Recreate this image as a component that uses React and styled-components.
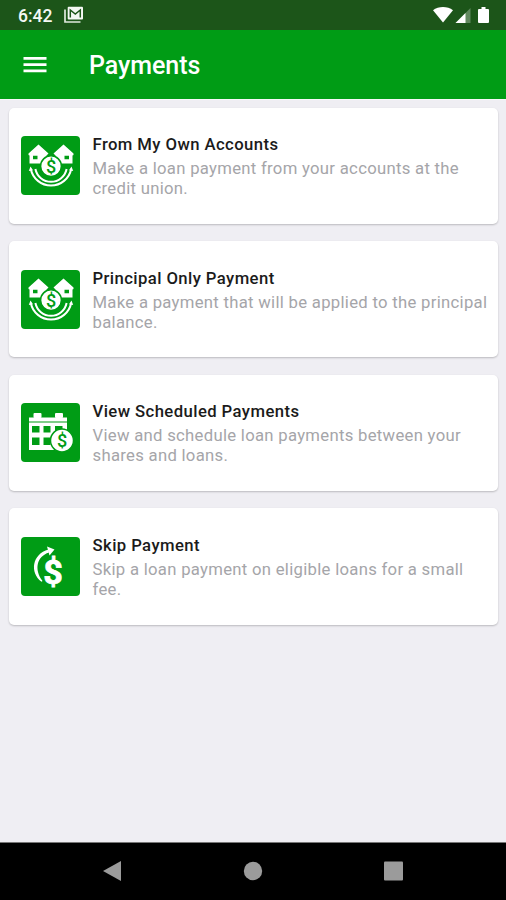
import React from "react";
import styled, { createGlobalStyle } from "styled-components";

const GlobalStyle = createGlobalStyle`
  body {
    margin: 0;
    background-color: #efeef3;
    font-family: Roboto, "Noto Sans", sans-serif;
  }
`;

const Screen = styled.div`
  display: flex;
  flex-direction: column;
  height: 900px;
  width: 506px;
  overflow: hidden;
`;

const StatusBar = styled.div`
  display: flex;
  align-items: center;
  flex: none;
  height: 30px;
  padding: 0 16px 0 18px;
  background-color: #1c5519;
  color: #f4f8f4;
`;

const Clock = styled.span`
  width: 46px;
  font-size: 17.5px;
  font-weight: 500;
  line-height: 30px;
  padding-top: 2px;
`;

const StatusIcons = styled.div`
  display: flex;
  margin-left: auto;
`;

const AppBar = styled.header`
  display: flex;
  align-items: center;
  flex: none;
  height: 69px;
  padding-left: 23px;
  background-color: #009c15;
  color: #fff;
`;

const MenuButton = styled.button`
  display: flex;
  width: 66px;
  padding: 0;
  border: 0;
  background: none;
  color: inherit;
`;

const PageTitle = styled.h1`
  margin: 0;
  padding-top: 2px;
  font-size: 25px;
  font-weight: 500;
  line-height: 30px;
  letter-spacing: -0.05px;
`;

const CardList = styled.main`
  display: flex;
  flex-direction: column;
  flex: 1;
  gap: 17.2px;
  padding: 7.5px 8px 0 9px;
  border-top: 1px solid #f8f8fa;
`;

const Card = styled.div`
  display: flex;
  align-items: center;
  flex: none;
  box-sizing: border-box;
  height: 116.4px;
  padding: 0 8px 0 12px;
  border-radius: 5px;
  background-color: #fff;
  box-shadow: 0 1px 2px rgba(0, 0, 0, 0.22);
`;

const Tile = styled.svg`
  display: block;
  flex: none;
  width: 59px;
  height: 59px;
  margin-right: 12.5px;
  border-radius: 4px;
  background-color: #009c15;
`;

const CardBody = styled.div`
  padding-top: 2px;
`;

const CardTitle = styled.div`
  font-size: 16.7px;
  font-weight: 500;
  line-height: 22px;
  letter-spacing: 0.41px;
  color: #1b1b1b;
  white-space: nowrap;
`;

const CardText = styled.div`
  margin-top: 3px;
  font-size: 16.7px;
  line-height: 20px;
  letter-spacing: 0.29px;
  color: #a5a5a9;
`;

const NavBar = styled.nav`
  display: flex;
  align-items: center;
  justify-content: space-between;
  flex: none;
  box-sizing: border-box;
  height: 58px;
  padding: 0 102px 2px;
  border-top: 1px solid #777;
  background-color: #000;
`;

const Coin = ({ x, y, r, size }) => (
  <>
    <circle cx={x} cy={y} r={r} fill="#fff" stroke="#009c15" strokeWidth="1.5" />
    <text
      x={x}
      y={y + size * 0.36}
      textAnchor="middle"
      fontSize={size}
      fontWeight="500"
      fill="#009c15"
    >
      $
    </text>
  </>
);

const HouseIcon = () => (
  <Tile viewBox="0 0 59 59">
    <g fill="#fff">
      <path d="M17.5 8.5 7.5 17.5v1.5l1 .5V27.5h17V19.5l2-2Z" />
      <path d="M42.5 8.5 32.5 17.5l2 2V27.5h17V19.5l1-.5v-1.5Z" />
      <path d="M9.5 30.5 7.8 35 12 34.3Z M50.5 30.5l1.7 4.5-4.2-.7Z" />
    </g>
    <path d="M12 19.8h4.5v3.5H12Z M43.5 19.8h4.5v3.5h-4.5Z" fill="#009c15" />
    <g fill="none" stroke="#fff" strokeWidth="2">
      <path d="M9.8 33A20.6 20.6 0 0 0 50.2 33" />
      <path d="M14.4 33A15.9 15.9 0 0 0 45.6 33" />
    </g>
    <Coin x={30} y={30.2} r={10.4} size={18} />
  </Tile>
);

const CalendarIcon = () => (
  <Tile viewBox="0 0 59 59">
    <g fill="#fff">
      <rect x="12.5" y="10" width="8" height="5" rx="1" />
      <rect x="34" y="10" width="8" height="5" rx="1" />
      <path d="M8 14.5H46V47H8Z" />
    </g>
    <g fill="#009c15">
      <path d="M8 18.6h38v1H8Z" />
      <path d="M11 23h7.5v6.5H11Z M22.5 23h7v6.5h-7Z M34 23h7.5v6.5H34Z" />
      <path d="M11 34.5h7.5v7.5H11Z M22.5 34.5h7v7.5h-7Z" />
    </g>
    <Coin x={41} y={37.5} r={11.5} size={18} />
  </Tile>
);

const SkipIcon = () => (
  <Tile viewBox="0 0 59 59">
    <path
      d="M20.5 44.8C8.5 36 11 17 27.5 12.6L28 15.6C15.5 19.5 13 33 21.5 44Z"
      fill="#fff"
    />
    <path d="M26 9.5 33.5 12.5 28.5 18.5Z" fill="#fff" />
    <text
      x="32"
      y="46.5"
      textAnchor="middle"
      fontSize="34"
      fontWeight="700"
      fill="#fff"
      stroke="#fff"
      strokeWidth="0.8"
    >
      $
    </text>
  </Tile>
);

const payments = [
  {
    title: "From My Own Accounts",
    text: "Make a loan payment from your accounts at the credit union.",
    icon: HouseIcon,
  },
  {
    title: "Principal Only Payment",
    text: "Make a payment that will be applied to the principal balance.",
    icon: HouseIcon,
  },
  {
    title: "View Scheduled Payments",
    text: "View and schedule loan payments between your shares and loans.",
    icon: CalendarIcon,
  },
  {
    title: "Skip Payment",
    text: "Skip a loan payment on eligible loans for a small fee.",
    icon: SkipIcon,
  },
];

const App = () => {
  return (
    <Screen>
      <GlobalStyle />
      <StatusBar>
        <Clock>6:42</Clock>
        <svg width="20" height="18" viewBox="0 0 20 18">
          <path d="M1 3.5V16h15.5" fill="none" stroke="#dfe9de" strokeWidth="1.7" />
          <rect x="3.7" y="0.7" width="15.3" height="12.8" rx="1" fill="#f4f8f4" />
          <path d="M6.3 11.5V4l5 4 5-4v7.5" fill="none" stroke="#1c5519" strokeWidth="1.5" />
        </svg>
        <StatusIcons>
          <svg width="57" height="18" viewBox="0 0 57 18" fill="#fff">
            <path d="M0 4.2C5.5-.1 14.5-.1 20 4.2L10 16.5Z" />
            <path d="M37.5 2V17H22.5Z" opacity=".3" />
            <path d="M32.5 7V17H22.5Z" />
            <path d="M46 3h2.5V1h4v2H55a1 1 0 0 1 1 1V16a1 1 0 0 1-1 1H46a1 1 0 0 1-1-1V4a1 1 0 0 1 1-1Z" />
          </svg>
        </StatusIcons>
      </StatusBar>
      <AppBar>
        <MenuButton aria-label="Menu">
          <svg width="24" height="18" viewBox="0 0 24 18" fill="currentColor">
            <path d="M.5 1H23.5V3.8H.5Z M.5 7.2H23.5V10H.5Z M.5 13.4H23.5V16.2H.5Z" />
          </svg>
        </MenuButton>
        <PageTitle>Payments</PageTitle>
      </AppBar>
      <CardList>
        {payments.map(({ title, text, icon: Icon }) => (
          <Card key={title}>
            <Icon />
            <CardBody>
              <CardTitle>{title}</CardTitle>
              <CardText>{text}</CardText>
            </CardBody>
          </Card>
        ))}
      </CardList>
      <NavBar>
        <svg width="20" height="22" viewBox="0 0 20 22">
          <path d="M1 11 19 1V21Z" fill="#9b9b9b" />
        </svg>
        <svg width="20" height="20" viewBox="0 0 20 20">
          <circle cx="10" cy="10" r="9.2" fill="#9b9b9b" />
        </svg>
        <svg width="20" height="20" viewBox="0 0 20 20">
          <rect x="0" y="0.5" width="19" height="19" rx="1" fill="#9b9b9b" />
        </svg>
      </NavBar>
    </Screen>
  );
};

export default App;
